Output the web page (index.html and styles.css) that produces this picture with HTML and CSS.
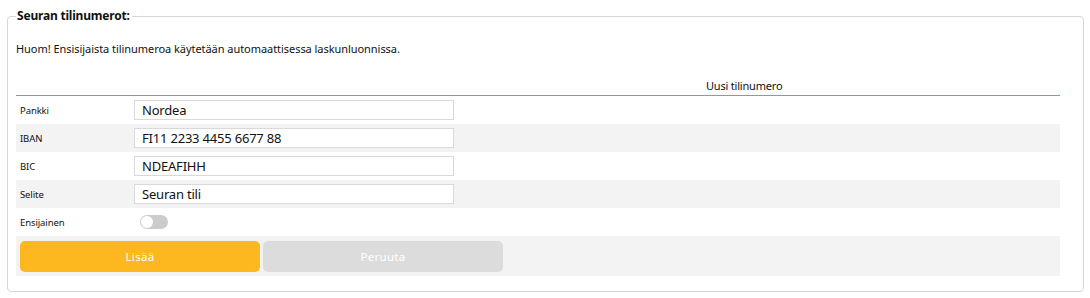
FILE: index.html
```html
<!DOCTYPE html>
<html lang="fi">
<head>
<meta charset="utf-8">
<title>Seuran tilinumerot</title>
<link rel="stylesheet" href="styles.css">
</head>
<body>
<div class="wrap">
  <fieldset class="box">
    <legend class="legend">Seuran tilinumerot:</legend>
    <p class="note">Huom! Ensisijaista tilinumeroa käytetään automaattisessa laskunluonnissa.</p>
    <div class="head"><span class="head-title">Uusi tilinumero</span></div>
    <div class="rows">
      <div class="row">
        <span class="label">Pankki</span>
        <input class="field" type="text" value="Nordea">
      </div>
      <div class="row alt">
        <span class="label">IBAN</span>
        <input class="field" type="text" value="FI11 2233 4455 6677 88">
      </div>
      <div class="row">
        <span class="label">BIC</span>
        <input class="field" type="text" value="NDEAFIHH">
      </div>
      <div class="row alt">
        <span class="label">Selite</span>
        <input class="field" type="text" value="Seuran tili">
      </div>
      <div class="row">
        <span class="label">Ensijainen</span>
        <span class="toggle"><span class="knob"></span></span>
      </div>
      <div class="row alt actions">
        <button class="btn primary" type="button">Lisää</button>
        <button class="btn secondary" type="button">Peruuta</button>
      </div>
    </div>
  </fieldset>
</div>
</body>
</html>
```
FILE: styles.css
```css
html, body {
  margin: 0;
  padding: 0;
  background: #ffffff;
}
body {
  font-family: "Noto Sans", "Open Sans", sans-serif;
  color: #111;
}
.wrap {
  padding: 8px 6px 0 7px;
}
.box {
  margin: 0;
  border: 1px solid #d6d6d6;
  border-radius: 4px;
  padding: 0 23px 15px 8px;
  min-width: 0;
}
.legend {
  font-size: 12px;
  font-weight: 700;
  line-height: 16px;
  padding: 0 2px 0 1px;
  margin-left: 0;
  letter-spacing: -0.2px;
}
.note {
  margin: 17px 0 0 0;
  font-size: 11px;
  line-height: 15px;
  letter-spacing: -0.05px;
}
.head {
  margin-top: 22px;
  border-bottom: 1px solid #2cc3c3;
  padding: 0 0 2px 690px;
  font-size: 11px;
  line-height: 15px;
  letter-spacing: -0.2px;
}
.rows {
  display: flex;
  flex-direction: column;
}
.row {
  height: 28px;
  display: flex;
  align-items: center;
  background: #ffffff;
}
.row.alt {
  background: #f3f3f3;
}
.label {
  width: 114px;
  padding-left: 4px;
  font-size: 9.5px;
  letter-spacing: -0.1px;
}
.field {
  box-sizing: border-box;
  width: 320px;
  height: 20px;
  margin: 0;
  border: 1px solid #d9d9d9;
  background: #fff;
  padding: 0 0 0 7px;
  font-family: "Noto Sans", "Open Sans", sans-serif;
  font-size: 13px;
  color: #111;
  letter-spacing: -0.2px;
}
.toggle {
  display: flex;
  align-items: center;
  width: 28px;
  height: 14px;
  margin-left: 6px;
  border-radius: 7px;
  background: #cccccc;
  padding: 0 1px;
  box-sizing: border-box;
}
.knob {
  width: 12px;
  height: 12px;
  border-radius: 50%;
  background: #ffffff;
}
.actions {
  height: 40px;
  gap: 3px;
  padding-left: 4px;
}
.btn {
  width: 240px;
  height: 31px;
  border: 0;
  border-radius: 5px;
  color: #ffffff;
  font-family: "Noto Sans", "Open Sans", sans-serif;
  font-size: 11.5px;
  letter-spacing: 0.3px;
  margin: 0;
  padding: 0;
}
.btn.primary {
  background: #fdb820;
}
.btn.secondary {
  background: #dcdcdc;
}
```
